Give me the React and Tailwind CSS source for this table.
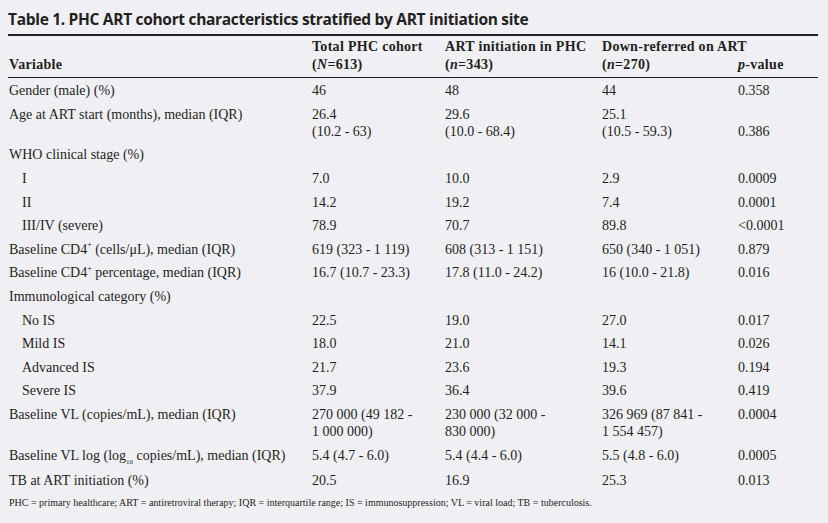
import React from "react";

const serif = { fontFamily: '"Liberation Serif", "Times New Roman", serif' };

const Sup = ({ children }) => (
  <sup className="relative top-[-1px] text-[8px] align-super leading-none">{children}</sup>
);
const Sub = ({ children }) => (
  <sub className="relative top-[1px] text-[7px] align-sub leading-none">{children}</sub>
);

const rows = [
  { v: "Gender (male) (%)", c: [["46"], ["48"], ["44"], ["0.358"]] },
  {
    v: "Age at ART start (months), median (IQR)",
    c: [["26.4", "(10.2 - 63)"], ["29.6", "(10.0 - 68.4)"], ["25.1", "(10.5 - 59.3)"], ["\u00a0", "0.386"]],
  },
  { v: "WHO clinical stage (%)", c: [[""], [""], [""], [""]] },
  { v: "I", sub: true, c: [["7.0"], ["10.0"], ["2.9"], ["0.0009"]] },
  { v: "II", sub: true, c: [["14.2"], ["19.2"], ["7.4"], ["0.0001"]] },
  { v: "III/IV (severe)", sub: true, c: [["78.9"], ["70.7"], ["89.8"], ["<0.0001"]] },
  {
    v: (
      <>
        Baseline CD4<Sup>+</Sup> (cells/μL), median (IQR)
      </>
    ),
    c: [["619 (323 - 1 119)"], ["608 (313 - 1 151)"], ["650 (340 - 1 051)"], ["0.879"]],
  },
  {
    v: (
      <>
        Baseline CD4<Sup>+</Sup> percentage, median (IQR)
      </>
    ),
    c: [["16.7 (10.7 - 23.3)"], ["17.8 (11.0 - 24.2)"], ["16 (10.0 - 21.8)"], ["0.016"]],
  },
  { v: "Immunological category (%)", c: [[""], [""], [""], [""]] },
  { v: "No IS", sub: true, c: [["22.5"], ["19.0"], ["27.0"], ["0.017"]] },
  { v: "Mild IS", sub: true, c: [["18.0"], ["21.0"], ["14.1"], ["0.026"]] },
  { v: "Advanced IS", sub: true, c: [["21.7"], ["23.6"], ["19.3"], ["0.194"]] },
  { v: "Severe IS", sub: true, c: [["37.9"], ["36.4"], ["39.6"], ["0.419"]] },
  {
    v: "Baseline VL (copies/mL), median (IQR)",
    c: [
      ["270 000 (49 182 -", "1 000 000)"],
      ["230 000 (32 000 -", "830 000)"],
      ["326 969 (87 841 -", "1 554 457)"],
      ["0.0004"],
    ],
  },
  {
    v: (
      <>
        Baseline VL log (log<Sub>10</Sub> copies/mL), median (IQR)
      </>
    ),
    c: [["5.4 (4.7 - 6.0)"], ["5.4 (4.4 - 6.0)"], ["5.5 (4.8 - 6.0)"], ["0.0005"]],
  },
  { v: "TB at ART initiation (%)", c: [["20.5"], ["16.9"], ["25.3"], ["0.013"]] },
];

const grid = "grid grid-cols-[302px_133px_157px_137px_81px]";

export default function App() {
  return (
    <div className="w-[828px] h-[523px] bg-[#f0f0f4] text-[#231f20] overflow-hidden">
      <div className="pl-[8px] pr-[10px]">
        <div
          className="pt-[8px] pb-[4px] text-[15.5px] leading-[22px] font-bold tracking-[-0.02em] border-b-2 border-[#231f20] whitespace-nowrap"
          style={{ fontFamily: '"Open Sans", "Noto Sans", sans-serif' }}
        >
          Table 1. PHC ART cohort characteristics stratified by ART initiation site
        </div>
        <div style={serif} className="text-[14px]">
          <div className={`${grid} font-bold tracking-[0.3px] leading-[18px] pt-[2px] pb-[3px] border-b border-[#231f20] whitespace-nowrap`}>
            <div className="self-end pl-px">Variable</div>
            <div className="pl-[2px]">
              Total PHC cohort
              <br />(<i>N</i>=613)
            </div>
            <div className="pl-[2px]">
              ART initiation in PHC
              <br />(<i>n</i>=343)
            </div>
            <div className="pl-[2px]">
              Down-referred on ART
              <br />(<i>n</i>=270)
            </div>
            <div className="self-end pl-px">
              <i>p</i>-value
            </div>
          </div>
          <div className="pt-[1px]">
            {rows.map((r, i) => (
              <div key={i} className={`${grid} leading-[17px] py-[3.3px]`}>
                <div className={`whitespace-nowrap ${r.sub ? "pl-[14px]" : "pl-px"}`}>{r.v}</div>
                {r.c.map((lines, j) => (
                  <div key={j} className={j === 3 ? "pl-px" : "pl-[2px]"}>
                    {lines.map((l, k) => (
                      <div key={k} className="whitespace-nowrap">
                        {l || "\u00a0"}
                      </div>
                    ))}
                  </div>
                ))}
              </div>
            ))}
          </div>
          <div className="pt-[5px] pl-px text-[10px] leading-[12px] whitespace-nowrap">
            PHC = primary healthcare; ART = antiretroviral therapy; IQR = interquartile range; IS = immunosuppression; VL = viral load; TB = tuberculosis.
          </div>
        </div>
      </div>
    </div>
  );
}
